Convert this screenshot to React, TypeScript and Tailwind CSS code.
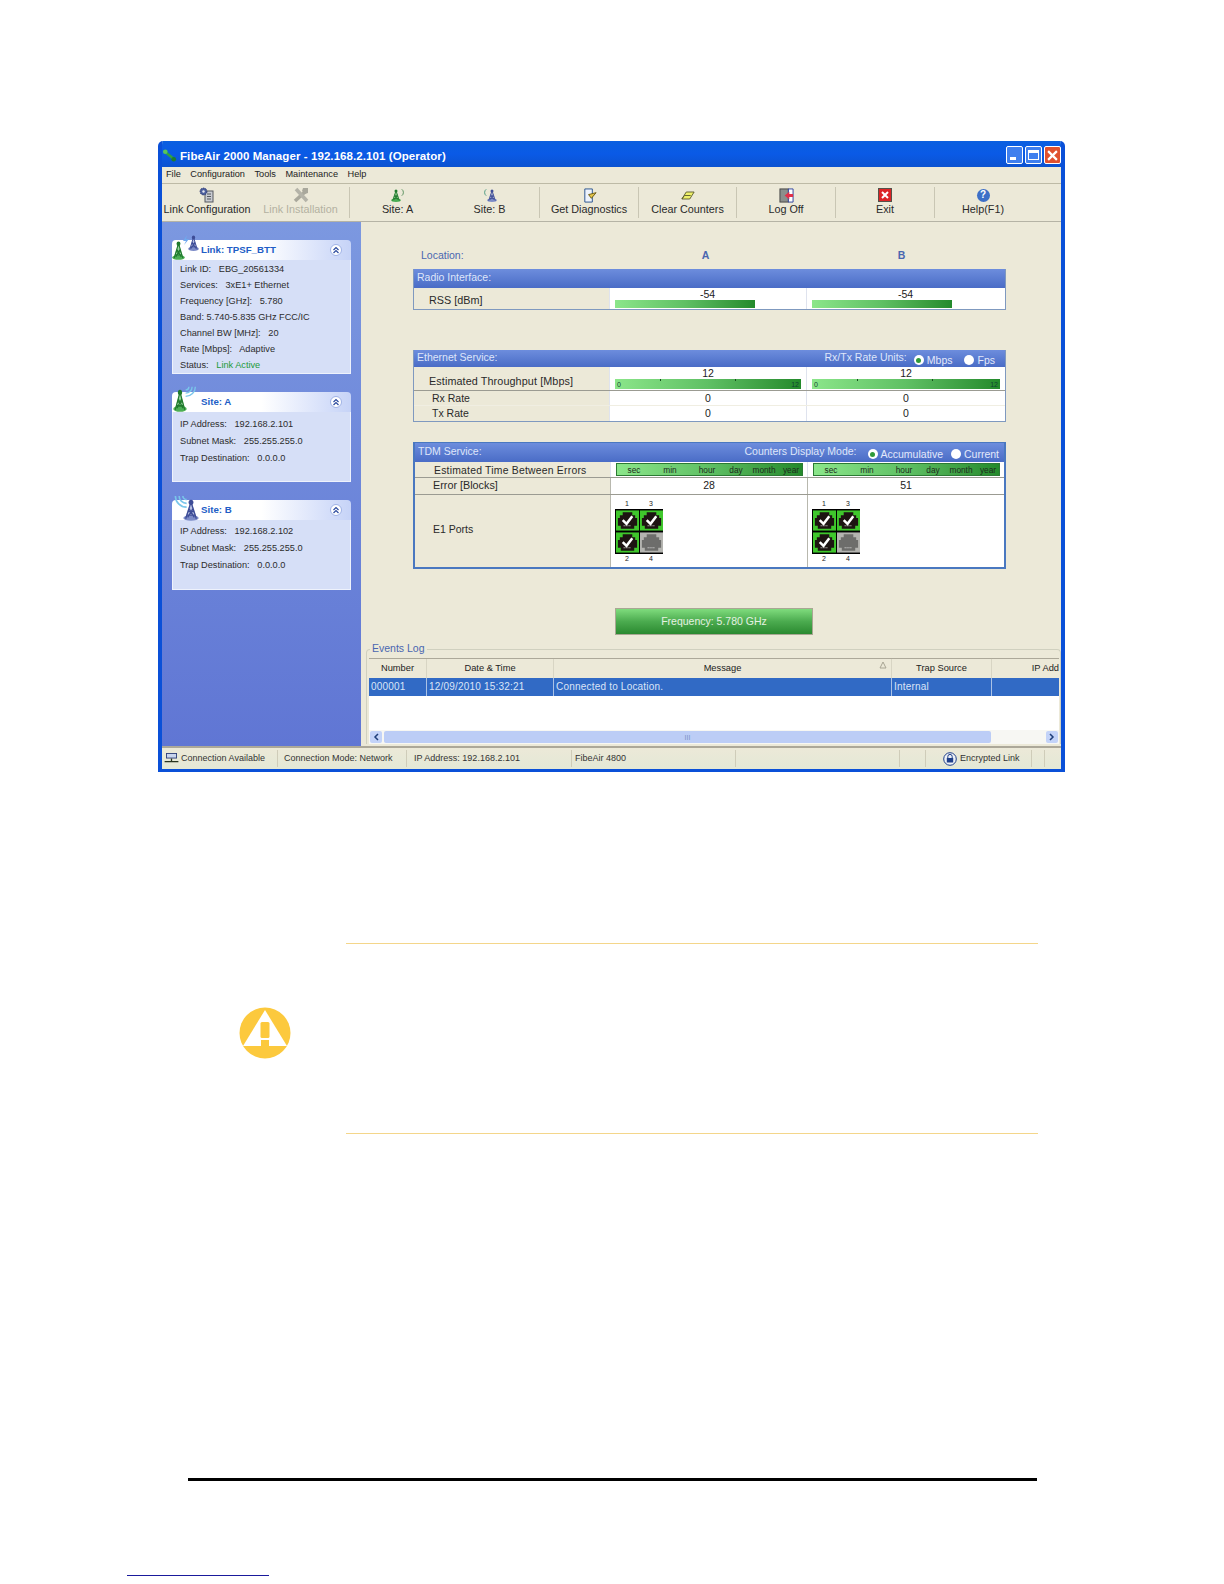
import type { ReactNode } from 'react';

const font = "[font-family:'Liberation_Sans',Arial,sans-serif]";

function Tower({ tone }: { tone: 'green' | 'blue' }) {
  const main = tone === 'green' ? '#4dae55' : '#7d8cc8';
  const dark = tone === 'green' ? '#1f7a2d' : '#3d4c96';
  return (
    <svg viewBox="0 0 24 30" preserveAspectRatio="none" className="h-full w-full">
      <ellipse cx="12" cy="26" rx="11.5" ry="3.8" fill={main} />
      <path d="M12 3 L3 27 H21 Z" fill={main} opacity="0.55" />
      <path d="M12 4 L4 27 M12 4 L20 27 M7.5 17 H16.5 M6 22 H18 M9 13 L17 25 M15 13 L7 25" stroke={dark} strokeWidth="2" fill="none" />
      <circle cx="12" cy="4.5" r="3.6" fill={dark} />
    </svg>
  );
}

function Waves({ flip = false }: { flip?: boolean }) {
  return (
    <svg viewBox="0 0 16 16" className="h-full w-full" style={{ transform: flip ? 'scaleX(-1)' : undefined }}>
      <path d="M2 14 A12 12 0 0 0 14 2 M2 10 A8 8 0 0 0 10 2 M2 6 A4 4 0 0 0 6 2" stroke="#79c6ea" strokeWidth="1.7" fill="none" />
    </svg>
  );
}

function MiniSite({ tone, flip }: { tone: 'green' | 'blue'; flip?: boolean }) {
  return (
    <div className={`flex h-[16px] items-center justify-center ${flip ? 'flex-row-reverse' : ''}`}>
      <div className="h-[13px] w-[10px]">
        <Tower tone={tone} />
      </div>
      <svg viewBox="0 0 5 10" className="mb-[5px] h-[9px] w-[4px]" style={{ transform: flip ? 'scaleX(-1)' : undefined }}>
        <path d="M1 1 A5 5 0 0 1 1 9" stroke={tone === 'green' ? '#3a7d44' : '#2c8a70'} fill="none" />
      </svg>
    </div>
  );
}

const toolbarIcons: Record<string, ReactNode> = {
  config: (
    <svg viewBox="0 0 16 16" className="h-[16px] w-[16px]">
      <rect x="6" y="4" width="8" height="11" fill="#c9ccd2" stroke="#55585f" />
      <path d="M8 7h4M8 9.5h4M8 12h4" stroke="#55585f" />
      <circle cx="4.5" cy="4.5" r="3.4" fill="#4c5f9e" stroke="#2f3a6e" strokeDasharray="1.5 1" />
      <circle cx="4.5" cy="4.5" r="1.2" fill="#e6e8ef" />
    </svg>
  ),
  install: (
    <svg viewBox="0 0 16 16" className="h-[16px] w-[16px]">
      <path d="M2 14 L13 4" stroke="#a9a89c" strokeWidth="3.6" />
      <path d="M3 2 L14 14" stroke="#b4b3a8" strokeWidth="3.6" />
      <path d="M10 1 L15 1 L15 6 L12 7 L9 4 Z" fill="#a9a89c" />
    </svg>
  ),
  diag: (
    <svg viewBox="0 0 16 16" className="h-[15px] w-[15px]">
      <path d="M3 1 H11 V15 H3 Z" fill="#eef3fb" stroke="#24508e" />
      <path d="M7 7 L15 5 L10 11 Z" fill="#e4c64a" stroke="#6b5a10" />
    </svg>
  ),
  clear: (
    <svg viewBox="0 0 16 12" className="h-[11px] w-[14px]">
      <path d="M1 10 L6 2 H15 L10 10 Z" fill="#eef06a" stroke="#55562a" />
      <path d="M1 10 L4 6 H11" stroke="#55562a" fill="none" />
    </svg>
  ),
  logoff: (
    <svg viewBox="0 0 16 16" className="h-[15px] w-[15px]">
      <rect x="1" y="1" width="9" height="14" fill="#8b8f8c" stroke="#444" />
      <path d="M10 1 H15 V15 H10 Z" fill="#fff" stroke="#2b3f9c" />
      <path d="M6 8 L11 4 V6.5 H15 V9.5 H11 V12 Z" fill="#e0304a" />
    </svg>
  ),
  exit: (
    <div className="flex h-[14px] w-[14px] items-center justify-center border border-[#55524a] bg-[#dc2426]">
      <svg viewBox="0 0 10 10" className="h-[10px] w-[10px]">
        <path d="M2 2 L8 8 M8 2 L2 8" stroke="#fff" strokeWidth="2" />
      </svg>
    </div>
  ),
  help: (
    <div className="flex h-[13px] w-[13px] items-center justify-center rounded-full bg-[#3d6fc7] text-[10px] font-bold leading-none text-white">?</div>
  ),
};

const tools = [
  { label: 'Link Configuration', w: 'w-[90px]', icon: toolbarIcons.config },
  { label: 'Link Installation', w: 'w-[98px]', icon: toolbarIcons.install, off: true, sep: true },
  { label: 'Site: A', w: 'w-[95px]', icon: <MiniSite tone="green" /> },
  { label: 'Site: B', w: 'w-[95px] pr-[5px]', icon: <MiniSite tone="blue" flip />, sep: true },
  { label: 'Get Diagnostics', w: 'w-[99px]', icon: toolbarIcons.diag, sep: true },
  { label: 'Clear Counters', w: 'w-[98px]', icon: toolbarIcons.clear, sep: true },
  { label: 'Log Off', w: 'w-[99px]', icon: toolbarIcons.logoff, sep: true },
  { label: 'Exit', w: 'w-[99px]', icon: toolbarIcons.exit, sep: true },
  { label: 'Help(F1)', w: 'w-[96px]', icon: toolbarIcons.help },
];

function TitleBar() {
  return (
    <div className="flex h-[26px] items-center bg-gradient-to-b from-[#0a5fe0] via-[#0a5ae6] to-[#0b52d0] px-[4px]">
      <svg viewBox="0 0 16 16" className="mr-[3px] mt-[3px] h-[15px] w-[15px]">
        <path d="M3 4 L13 12" stroke="#2ea043" strokeWidth="3" />
        <circle cx="3.5" cy="4" r="2.5" fill="#57c45c" />
        <circle cx="12.5" cy="12" r="2.5" fill="#1e7d2e" />
      </svg>
      <span className="mt-[5px] text-[11.5px] font-bold tracking-[0.08px] text-white">FibeAir 2000 Manager - 192.168.2.101 (Operator)</span>
      <div className="ml-auto mt-[2px] flex gap-[2px]">
        <div className="flex h-[18px] w-[17px] items-end rounded-[2px] border border-white bg-[#3f7fee] pb-[3px] pl-[3px]">
          <div className="h-[3px] w-[6px] bg-white" />
        </div>
        <div className="flex h-[18px] w-[17px] items-center justify-center rounded-[2px] border border-white bg-[#3f7fee]">
          <div className="h-[10px] w-[11px] border border-t-[3px] border-white" />
        </div>
        <div className="flex h-[18px] w-[17px] items-center justify-center rounded-[2px] border border-white bg-[#e0512f]">
          <svg viewBox="0 0 10 10" className="h-[11px] w-[11px]">
            <path d="M1 1 L9 9 M9 1 L1 9" stroke="#fff" strokeWidth="2" />
          </svg>
        </div>
      </div>
    </div>
  );
}

function MenuBar() {
  return (
    <div className="flex h-[17px] items-center gap-[9.5px] border-b border-[#bdbaa6] pl-[4px] text-[9.2px] text-[#222]">
      <span>File</span>
      <span>Configuration</span>
      <span>Tools</span>
      <span>Maintenance</span>
      <span>Help</span>
    </div>
  );
}

function Toolbar() {
  return (
    <div className="flex h-[38px] items-start border-b border-[#b5b3a5] pt-[3px]">
      {tools.map((t) => (
        <div key={t.label} className={`${t.w} flex h-[31px] shrink-0 flex-col items-center ${t.sep ? 'border-r border-[#c9c6b4]' : ''}`}>
          <div className="flex h-[16px] items-center justify-center">{t.icon}</div>
          <span className={`whitespace-nowrap text-[10.8px] leading-[13px] ${t.off ? 'text-[#b3b1a1]' : 'text-[#2a2a2a]'}`}>{t.label}</span>
        </div>
      ))}
    </div>
  );
}

type CardProps = {
  title: string;
  rows: string[];
  rowClass: string;
  bodyClass: string;
  icon: ReactNode;
  status?: string;
};

function SideCard({ title, rows, rowClass, bodyClass, icon, status }: CardProps) {
  return (
    <div className="relative w-[179px]">
      <div className="absolute -left-[1px] -top-[8px] z-10 h-[31px] w-[28px]">{icon}</div>
      <div className="flex h-[20px] items-center rounded-t-[4px] bg-gradient-to-r from-white via-white to-[#c6d3f7] pl-[29px] pr-[9px]">
        <span className="pt-[1px] text-[9.7px] font-bold text-[#215dc6]">{title}</span>
        <div className="ml-auto flex h-[12px] w-[12px] items-center justify-center rounded-full border border-[#9fb2e6] bg-white">
          <svg viewBox="0 0 8 8" className="h-[8px] w-[8px]">
            <path d="M1.5 4 L4 1.5 L6.5 4 M1.5 7 L4 4.5 L6.5 7" stroke="#2b4a9e" strokeWidth="1.2" fill="none" />
          </svg>
        </div>
      </div>
      <div className={`${bodyClass} border border-t-0 border-[#eef2fc] bg-[#d6dff7] pl-[7px] text-[9.2px] text-[#2c2c2c]`}>
        {rows.map((r) => (
          <div key={r} className={`${rowClass} flex items-center whitespace-pre`}>{r}</div>
        ))}
        {status && (
          <div className={`${rowClass} flex items-center whitespace-pre`}>
            Status:   <span className="text-[#1c9a3a]">{status}</span>
          </div>
        )}
      </div>
    </div>
  );
}

function Sidebar() {
  return (
    <div className="flex h-full w-[199px] shrink-0 flex-col gap-[18px] bg-gradient-to-b from-[#7c98e0] to-[#6076d4] pl-[10px] pt-[18px]">
      <SideCard
        title="Link: TPSF_BTT"
        rowClass="h-[16px]"
        bodyClass="h-[114px] pt-[2px]"
        status="Link Active"
        icon={
          <div className="relative h-full w-full">
            <div className="absolute bottom-[3px] left-[1px] h-[19px] w-[13px]"><Tower tone="green" /></div>
            <svg viewBox="0 0 6 10" className="absolute left-[12px] top-[3px] h-[10px] w-[6px]">
              <path d="M4 0 L0 6 H3 L1 10 L6 4 H3 Z" fill="#6fa8ee" />
            </svg>
            <div className="absolute left-[17px] top-[3px] h-[16px] w-[11px]"><Tower tone="blue" /></div>
          </div>
        }
        rows={[
          'Link ID:   EBG_20561334',
          'Services:   3xE1+ Ethernet',
          'Frequency [GHz]:   5.780',
          'Band: 5.740-5.835 GHz FCC/IC',
          'Channel BW [MHz]:   20',
          'Rate [Mbps]:   Adaptive',
        ]}
      />
      <SideCard
        title="Site: A"
        rowClass="h-[17px]"
        bodyClass="h-[70px] pt-[4px]"
        icon={
          <div className="relative h-full w-full">
            <div className="absolute bottom-[3px] left-[2px] h-[23px] w-[14px]"><Tower tone="green" /></div>
            <div className="absolute left-[13px] top-0 h-[15px] w-[13px]"><Waves /></div>
          </div>
        }
        rows={['IP Address:   192.168.2.101', 'Subnet Mask:   255.255.255.0', 'Trap Destination:   0.0.0.0']}
      />
      <SideCard
        title="Site: B"
        rowClass="h-[17px]"
        bodyClass="h-[70px] pt-[3px]"
        icon={
          <div className="relative h-full w-full">
            <div className="absolute bottom-[2px] left-[12px] h-[22px] w-[16px]"><Tower tone="blue" /></div>
            <div className="absolute left-[1px] top-[2px] h-[15px] w-[18px]"><Waves flip /></div>
          </div>
        }
        rows={['IP Address:   192.168.2.102', 'Subnet Mask:   255.255.255.0', 'Trap Destination:   0.0.0.0']}
      />
    </div>
  );
}

function Radio({ label, on }: { label: string; on?: boolean }) {
  return (
    <span className="mt-[3px] flex items-center gap-[3px]">
      <span className="flex h-[10px] w-[10px] items-center justify-center rounded-full bg-white">
        {on && <span className="h-[5px] w-[5px] rounded-full bg-[#2f9a3a]" />}
      </span>
      <span className="text-[10.5px] text-[#e3e9fb]">{label}</span>
    </span>
  );
}

function SectionHead({ title, right, tall }: { title: string; right?: ReactNode; tall?: boolean }) {
  return (
    <div className={`flex items-center justify-between bg-gradient-to-b from-[#6d8ddd] to-[#4a6cc6] pl-[3px] pr-[5px] text-[10.5px] text-[#dfe6fa] ${tall ? 'h-[19px]' : 'h-[17px]'}`}>
      <span className="mb-[2px]">{title}</span>
      {right}
    </div>
  );
}

const rowGrid = 'grid grid-cols-[195px_197px_1fr]';
const lightBar = 'bg-gradient-to-r from-[#8be68a] via-[#5fc064] to-[#238a2b]';
const valueCell = 'border-l border-[#dfe3ee] bg-white text-center text-[#222]';
const blockCell = 'border-l border-[#b8b8ae] bg-white';

function RssCell() {
  return (
    <div className="flex flex-col border-l border-[#dfe3ee] bg-white pl-[5px]">
      <div className="h-[12px] pr-[6px] text-center text-[10.5px] leading-[12px] text-[#222]">-54</div>
      <div className={`${lightBar} h-[8px] w-[140px]`} />
    </div>
  );
}

function ThroughputCell() {
  return (
    <div className="flex flex-col border-l border-[#dfe3ee] bg-white px-[5px]">
      <div className="h-[12px] text-center text-[10.5px] leading-[12px] text-[#222]">12</div>
      <div className={`${lightBar} relative flex h-[10px] items-center justify-between px-[2px] text-[7px] leading-none text-[#143]`}>
        <span>0</span>
        <span>12</span>
        <span className="absolute left-[45px] top-0 h-[2px] w-[1px] bg-[#174f1e]" />
        <span className="absolute left-[120px] top-0 h-[2px] w-[1px] bg-[#174f1e]" />
      </div>
    </div>
  );
}

function TimeCell() {
  return (
    <div className="flex items-center border-l border-[#dfe3ee] bg-white pl-[5px]">
      <div className={`${lightBar} flex h-[13px] w-[187px] border border-[#2b7a33] text-[8.3px] leading-[12px] text-[#1d2b1d]`}>
        <span className="w-[34px] text-center">sec</span>
        <span className="w-[38px] text-center">min</span>
        <span className="w-[36px] text-center">hour</span>
        <span className="w-[22px] text-center">day</span>
        <span className="w-[34px] text-center">month</span>
        <span className="w-[20px] text-center">year</span>
      </div>
    </div>
  );
}

function PortIcon({ on }: { on: boolean }) {
  const bg = on ? '#3fc72c' : '#b4b4b0';
  const fg = on ? '#1d1412' : '#6d6d6b';
  return (
    <svg viewBox="0 0 24 21" className="h-[21px] w-[23px]">
      <rect width="24" height="21" fill={bg} />
      <path d="M7 2 H17 V5 H20 V8 H22 V16 H19 V19 H5 V16 H2 V8 H4 V5 H7 Z" fill={fg} />
      <path d="M8 16 H16" stroke="#e8e8e8" strokeDasharray="1 1" />
      {on && <path d="M7 10 L11 14 L17 6" stroke="#fff" strokeWidth="2.6" fill="none" />}
    </svg>
  );
}

function Ports() {
  return (
    <div className="flex w-[48px] flex-col text-center text-[7px] leading-[9px] text-[#222]">
      <div className="flex h-[10px]">
        <span className="w-[24px]">1</span>
        <span className="w-[24px]">3</span>
      </div>
      <div className="grid grid-cols-2 gap-[1px] bg-black p-[1px]">
        <PortIcon on />
        <PortIcon on />
        <PortIcon on />
        <PortIcon on={false} />
      </div>
      <div className="flex h-[9px]">
        <span className="w-[24px]">2</span>
        <span className="w-[24px]">4</span>
      </div>
    </div>
  );
}

function Dashboard() {
  return (
    <div className="pl-[52px] text-[10.5px] leading-[13px]">
      <div className={`${rowGrid} h-[47px] w-[593px] items-end pb-[7px]`}>
        <span className="pl-[8px] text-[#4a66b0]">Location:</span>
        <span className="pr-[2px] text-center font-bold text-[#4a66b0]">A</span>
        <span className="pr-[8px] text-center font-bold text-[#4a66b0]">B</span>
      </div>

      <div className="w-[593px] border-b border-l border-r border-[#7f99bf]">
        <SectionHead title="Radio Interface:" tall />
        <div className={`${rowGrid} h-[21px]`}>
          <div className="flex items-center pl-[15px] pt-[3px] text-[10.8px] text-[#2a2a2a]">RSS [dBm]</div>
          <RssCell />
          <RssCell />
        </div>
      </div>

      <div className="mt-[40px] w-[593px] border-b border-l border-r border-[#7f99bf]">
        <SectionHead
          title="Ethernet Service:"
          right={
            <span className="mr-[5px] flex items-center gap-[6px]">
              <span className="mb-[2px] mr-[1px]">Rx/Tx Rate Units:</span>
              <Radio label="Mbps" on />
              <span className="w-0" />
              <Radio label="Fps" />
            </span>
          }
        />
        <div className={`${rowGrid} h-[24px] border-b border-[#9b9b92]`}>
          <div className="flex items-center pl-[15px] pt-[5px] text-[10.8px] tracking-[0.1px] text-[#2a2a2a]">Estimated Throughput [Mbps]</div>
          <ThroughputCell />
          <ThroughputCell />
        </div>
        <div className={`${rowGrid} h-[15px] border-b border-[#f0eee2]`}>
          <div className="flex items-center pl-[18px] text-[#2a2a2a]">Rx Rate</div>
          <div className={`${valueCell} leading-[14px]`}>0</div>
          <div className={`${valueCell} leading-[14px]`}>0</div>
        </div>
        <div className={`${rowGrid} h-[15px]`}>
          <div className="flex items-center pl-[18px] text-[#2a2a2a]">Tx Rate</div>
          <div className={`${valueCell} leading-[14px]`}>0</div>
          <div className={`${valueCell} leading-[14px]`}>0</div>
        </div>
      </div>

      <div className="mt-[20px] w-[593px] border-x-2 border-b-2 border-t border-[#4a78c0]">
        <SectionHead
          title="TDM Service:"
          tall
          right={
            <span className="flex items-center gap-[8px]">
              <span className="mb-[2px] mr-[3px]">Counters Display Mode:</span>
              <Radio label="Accumulative" on />
              <Radio label="Current" />
            </span>
          }
        />
        <div className={`${rowGrid} h-[16px] border-b border-[#9b9b92]`}>
          <div className="flex items-center whitespace-nowrap pl-[19px] pt-[1px] text-[10.4px] tracking-[0.22px] text-[#2a2a2a]">Estimated Time Between Errors</div>
          <TimeCell />
          <TimeCell />
        </div>
        <div className={`${rowGrid} h-[17px] border-b border-[#9b9b92]`}>
          <div className="flex items-center pb-[2px] pl-[18px] text-[10.8px] text-[#2a2a2a]">Error [Blocks]</div>
          <div className={`${blockCell} text-center leading-[14px] text-[#222]`}>28</div>
          <div className={`${blockCell} text-center leading-[14px] text-[#222]`}>51</div>
        </div>
        <div className={`${rowGrid} h-[72px]`}>
          <div className="flex items-center pb-[3px] pl-[18px] text-[#2a2a2a]">E1 Ports</div>
          <div className={`${blockCell} pl-[4px] pt-[4px]`}><Ports /></div>
          <div className={`${blockCell} pl-[4px] pt-[4px]`}><Ports /></div>
        </div>
      </div>

      <div className="ml-[202px] mt-[39px] flex h-[27px] w-[198px] items-center justify-center border border-[#a9a793] bg-gradient-to-b from-[#7fdc7d] via-[#4bab4f] to-[#2a8a30] text-[10.5px] text-[#e5f2e2]">
        Frequency: 5.780 GHz
      </div>
    </div>
  );
}

const logCols = [
  { label: 'Number', w: 'w-[58px]', value: '000001' },
  { label: 'Date & Time', w: 'w-[127px]', value: '12/09/2010 15:32:21' },
  { label: 'Message', w: 'w-[338px]', value: 'Connected to Location.' },
  { label: 'Trap Source', w: 'w-[100px]', value: 'Internal' },
  { label: 'IP Add', w: 'w-[67px]', value: '' },
];

function EventsLog() {
  return (
    <div className="relative ml-[5px] mr-[1px] mt-[14px] rounded-t-[4px] border-l border-r border-t border-[#d0d0bf] pl-[2px] pr-[1px] pt-[8px]">
      <span className="absolute -top-[9px] left-[3px] bg-[#ece9d8] px-[2px] text-[10.5px] leading-[14px] text-[#4a66b0]">Events Log</span>
      <div className="flex h-[20px] border-t border-[#aca899] bg-[#ece9d8] text-[9.3px] text-[#222]">
        {logCols.map((c) => (
          <div key={c.label} className={`${c.w} relative flex items-center ${c.label === 'IP Add' ? 'justify-end' : 'justify-center border-r border-[#d8d5c4]'}`}>
            {c.label}
            {c.label === 'Message' && (
              <svg viewBox="0 0 8 8" className="absolute right-[4px] top-[2px] h-[8px] w-[8px]">
                <path d="M4 1 L7 7 H1 Z" fill="none" stroke="#a8a594" />
              </svg>
            )}
          </div>
        ))}
      </div>
      <div className="flex h-[18px] bg-[#316ac5] text-[10px] leading-[17px] text-[#dbe5f7]">
        {logCols.map((c) => (
          <div key={c.label} className={`${c.w} overflow-hidden whitespace-nowrap border-r border-[#aac2e6] pl-[2px] tracking-[0.2px] last:border-r-0`}>{c.value}</div>
        ))}
      </div>
      <div className="h-[34px] bg-white" />
      <div className="flex h-[14px] items-center bg-[#f7f7f3] px-[1px]">
        <div className="flex h-[12px] w-[12px] items-center justify-center rounded-[2px] bg-[#c3d3f8]">
          <svg viewBox="0 0 6 8" className="h-[8px] w-[6px]"><path d="M5 1 L2 4 L5 7" stroke="#1f3f7a" strokeWidth="1.5" fill="none" /></svg>
        </div>
        <div className="ml-[2px] flex h-[12px] w-[607px] items-center justify-center rounded-[2px] bg-[#bccdf6] text-[7px] leading-none text-[#7f92c4]">III</div>
        <div className="ml-auto flex h-[12px] w-[12px] items-center justify-center rounded-[2px] bg-[#c3d3f8]">
          <svg viewBox="0 0 6 8" className="h-[8px] w-[6px]"><path d="M1 1 L4 4 L1 7" stroke="#1f3f7a" strokeWidth="1.5" fill="none" /></svg>
        </div>
      </div>
    </div>
  );
}

const statusCells = [
  { w: 'w-[116px]', pl: 'pl-[2px]', text: 'Connection Available', icon: 'net' },
  { w: 'w-[129px]', pl: 'pl-[6px]', text: 'Connection Mode: Network' },
  { w: 'w-[165px]', pl: 'pl-[7px]', text: 'IP Address: 192.168.2.101' },
  { w: 'w-[164px]', pl: 'pl-[3px]', text: 'FibeAir 4800' },
  { w: 'w-[164px]', pl: '', text: '' },
  { w: 'w-[26px]', pl: '', text: '' },
  { w: 'w-[106px]', pl: 'pl-[23px]', text: 'Encrypted Link', icon: 'lock' },
  { w: 'w-[13px]', pl: '', text: '' },
];

function StatusBar() {
  return (
    <div className="flex h-[23px] items-center border-t-2 border-[#aca899] bg-gradient-to-b from-[#ece9d8] to-[#e4e8d6] text-[9px] text-[#333]">
      {statusCells.map((c, i) => (
        <div key={i} className={`${c.w} ${c.pl} flex h-[17px] shrink-0 items-center gap-[2px] whitespace-nowrap border-r border-[#cfccb9]`}>
          {c.icon === 'net' && (
            <svg viewBox="0 0 15 12" className="h-[11px] w-[15px]">
              <rect x="2" y="0.5" width="11" height="5" fill="#c9d5ee" stroke="#2e3f7a" />
              <path d="M7.5 6 V9 M0 9.5 H15" stroke="#27331f" strokeWidth="1.4" />
            </svg>
          )}
          {c.icon === 'lock' && (
            <svg viewBox="0 0 14 14" className="-ml-[6px] mr-[1px] h-[14px] w-[14px]">
              <circle cx="7" cy="7" r="6.3" fill="#eef1f6" stroke="#1f3f8a" />
              <path d="M4.8 6 V4.6 A2.2 2.2 0 0 1 9.2 4.6 V6" stroke="#1f3f8a" fill="none" />
              <rect x="3.8" y="6" width="6.4" height="4.5" fill="#1f3f8a" />
            </svg>
          )}
          {c.text}
        </div>
      ))}
    </div>
  );
}

function ManagerWindow() {
  return (
    <div className="ml-[158px] flex h-[631px] w-[907px] flex-col overflow-hidden rounded-t-[5px] border-x-4 border-b-[3px] border-[#0a50d8] bg-[#ece9d8]">
      <div className="-mx-[4px]"><TitleBar /></div>
      <MenuBar />
      <Toolbar />
      <div className="flex min-h-0 flex-1">
        <Sidebar />
        <div className="flex flex-1 flex-col">
          <Dashboard />
          <EventsLog />
        </div>
      </div>
      <StatusBar />
    </div>
  );
}

function WarningIcon() {
  return (
    <svg viewBox="0 0 52 52" className="mt-[64px] h-[52px] w-[52px]">
      <circle cx="26" cy="26" r="25.5" fill="#fcc93d" />
      <path d="M26 3 L48 39 H4 Z" fill="#fff" />
      <rect x="21.5" y="15" width="9" height="16" rx="1.5" fill="#fcc93d" />
      <rect x="22" y="33" width="8" height="6" fill="#fcc93d" />
    </svg>
  );
}

export default function App() {
  return (
    <div className={`${font} h-[1584px] w-[1224px] overflow-hidden bg-white pt-[141px]`}>
      <ManagerWindow />

      <div className="mt-[171px] flex pl-[239px]">
        <WarningIcon />
        <div className="ml-[55px] flex h-[191px] w-[692px] flex-col justify-between">
          <div className="h-[1px] bg-[#f4d68a]" />
          <div className="h-[1px] bg-[#f4d68a]" />
        </div>
      </div>

      <div className="ml-[188px] mt-[344px] h-[3px] w-[849px] bg-black" />
      <div className="ml-[127px] mt-[94px] h-[1px] w-[142px] bg-[#1a1a9c]" />
    </div>
  );
}
